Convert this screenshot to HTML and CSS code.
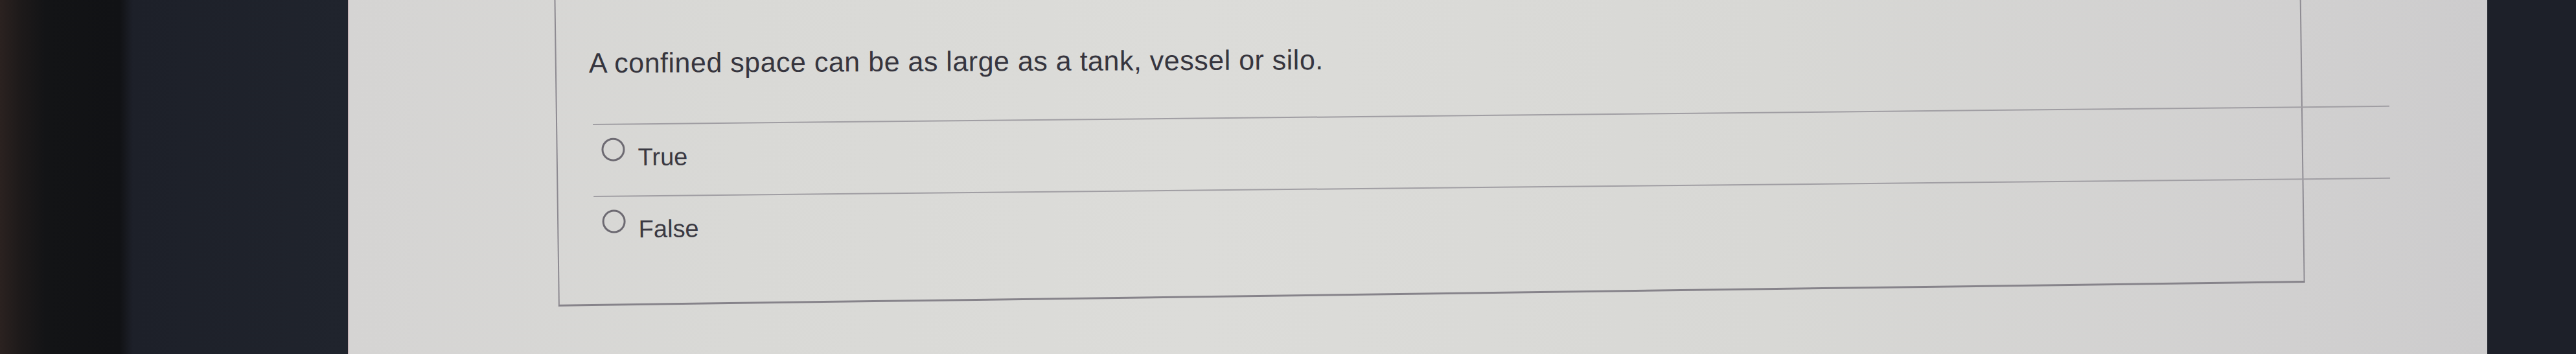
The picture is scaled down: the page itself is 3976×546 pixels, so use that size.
FILE: index.html
```html
<!DOCTYPE html>
<html lang="en">
<head>
<meta charset="utf-8">
<title>Quiz question</title>
<link rel="stylesheet" href="styles.css">
</head>
<body>
<div class="screen">
  <div class="bezel-left"></div>
  <main class="page">
    <section class="card">
      <p class="question">A confined space can be as large as a tank, vessel or silo.</p>
      <ul class="options">
        <li class="option"><span class="radio"></span><span class="label">True</span></li>
        <li class="option"><span class="radio"></span><span class="label">False</span></li>
      </ul>
    </section>
  </main>
  <div class="bezel-right"></div>
</div>
</body>
</html>
```
FILE: styles.css
```css
html, body {
  margin: 0;
  padding: 0;
  height: 546px;
  overflow: hidden;
  background: #1d2029;
}

.screen {
  display: flex;
  width: 3976px;
  height: 546px;
}

.bezel-left {
  flex: none;
  width: 537px;
  background: linear-gradient(90deg, #2b2220 0, #1e1a1a 30px, #131416 70px, #111215 185px, #1d2029 205px, #20242d 537px);
}

.page {
  flex: none;
  box-sizing: border-box;
  width: 3302px;
  height: 546px;
  overflow: hidden;
  border-left: 2px solid #cbb9bc;
  background: linear-gradient(90deg, #d5d4d3 0, #d9d9d6 600px, #dcdcd9 1300px, #d8d8d5 2200px, #d1d0d0 3000px, #cdcccd 3300px);
  font-family: "Liberation Sans", Arial, sans-serif;
  color: #36353e;
}

.card {
  box-sizing: border-box;
  width: 2696px;
  margin: -20px 0 0 318px;
  padding: 96px 0 56px 50px;
  border-left: 2px solid #8d8a91;
  border-right: 2px solid #8f8c93;
  border-bottom: 3px solid #86838a;
  transform: rotate(-0.78deg);
  transform-origin: 52px 133px;
}

.question {
  margin: 0;
  font-size: 43px;
  line-height: 43px;
  letter-spacing: 0.5px;
  white-space: nowrap;
  transform: rotate(0.53deg);
  transform-origin: 0 36px;
}

.options {
  list-style: none;
  margin: 72px 0 0 0;
  padding: 0;
  transform: rotate(0.2deg);
  transform-origin: 0 0;
}

.option {
  display: flex;
  align-items: flex-start;
  box-sizing: border-box;
  height: 111px;
  margin: 0 -136px 0 5px;
  padding: 20px 0 0 13px;
  border-top: 2px solid #a09ea3;
}

.radio {
  flex: none;
  box-sizing: border-box;
  width: 36px;
  height: 36px;
  border: 3px solid #6d6a72;
  border-radius: 50%;
}

.label {
  margin: 11px 0 0 20px;
  font-size: 38px;
  line-height: 38px;
  color: #3a3942;
}
```
